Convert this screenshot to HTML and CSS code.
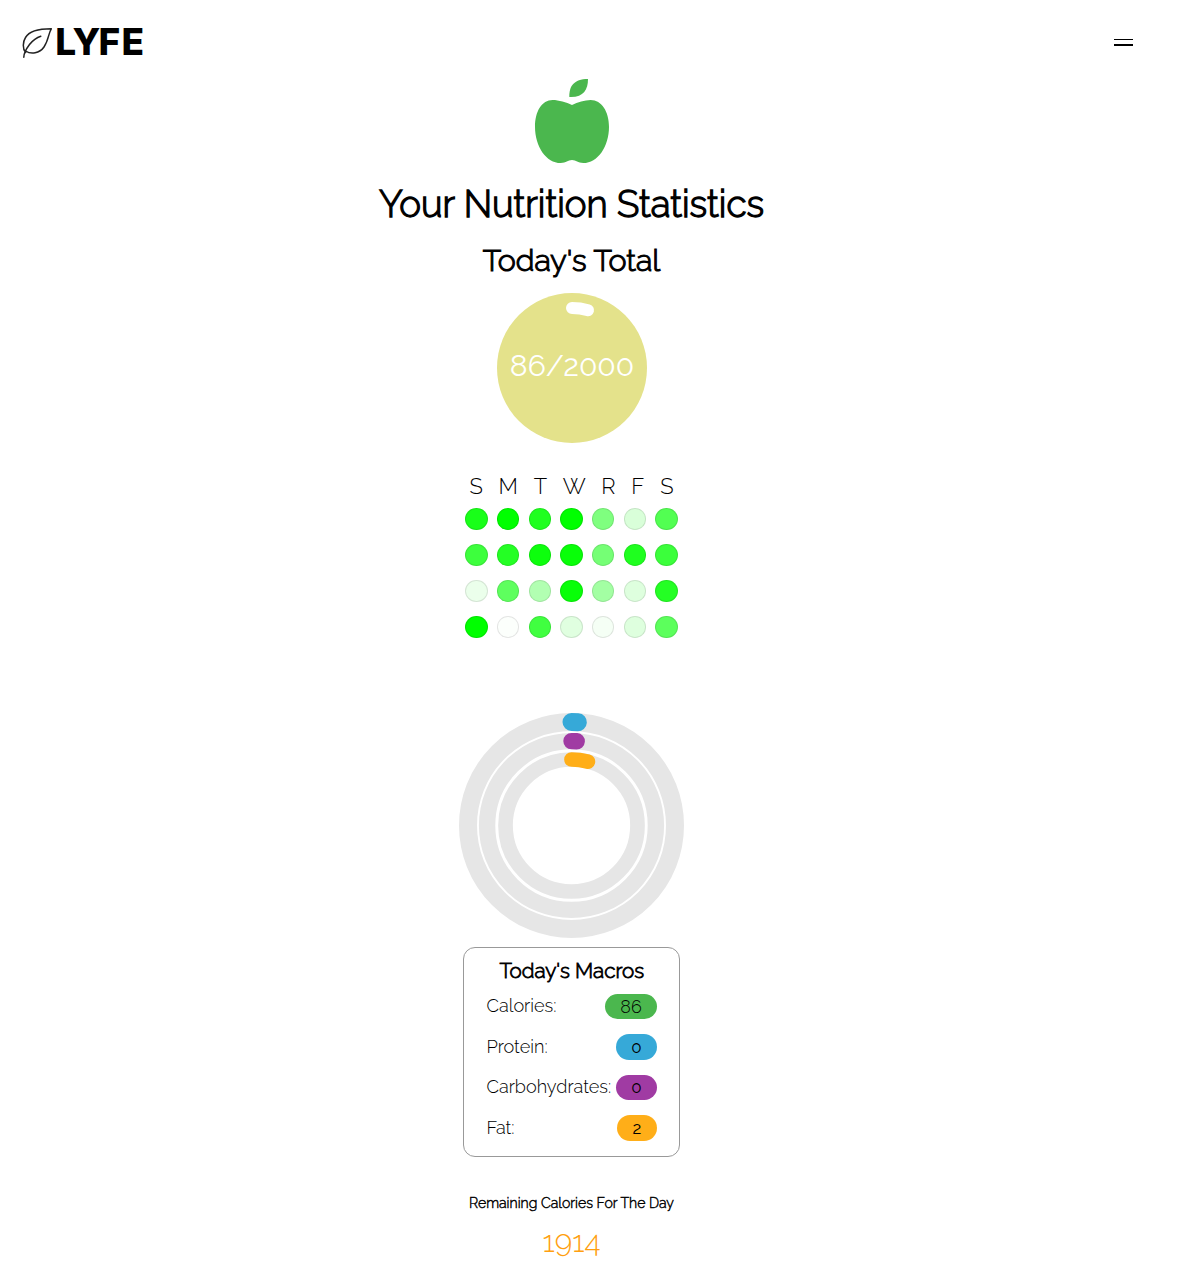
FILE: index.html
```html
<!DOCTYPE html>
<html lang="en">
<head>
<meta charset="utf-8">
<title>Lyfe</title>
<link rel="stylesheet" href="styles.css">
</head>
<body>
<header class="header">
  <svg class="logo" width="124" height="36" viewBox="0 0 124 36" role="img" aria-label="LYFE">
    <path class="leaf" d="M3.8 32.3C3.7 28 6.5 23.5 9.5 19.5C12.5 15.7 16 12.7 20.8 11.2M5.6 27.5C2.4 23.8 2.7 17 5.5 12.5C9 6.5 19 3.8 31.3 3.8C28.5 8 28.7 15 24 22C19.5 28.5 11 29.7 5.6 26"/>
    <text class="wordmark" x="35.2 52.6 78.6 101.4" y="30">LYFE</text>
  </svg>
  <button class="menu" aria-label="Menu"><span class="bar thin"></span><span class="bar"></span></button>
</header>
<main class="stats">
  <svg class="apple" width="75" height="85" viewBox="42 27 225 255">
    <path d="M148 81C147 49 161 27 204 27C204 60 190 83 148 81Z"/>
    <path d="M156 105C139 97 116 90 98 90C65 90 45 125 45 170C45 230 79 279 122 279C139 279 143 270 156 270C169 270 173 279 190 279C233 279 267 230 267 170C267 125 245 90 212 90C194 90 173 97 156 105Z"/>
  </svg>
  <h1 class="title">Your Nutrition Statistics</h1>
  <h2 class="subtitle">Today's Total</h2>
  <div class="total">
    <svg class="total-ring" width="150" height="150" viewBox="0 0 150 150"><circle cx="75" cy="75" r="60"/></svg>
    <span class="total-text">86/2000</span>
  </div>
  <div class="days"><span>S</span><span>M</span><span>T</span><span>W</span><span>R</span><span>F</span><span>S</span></div>
  <div class="calendar">
    <i class="dot" style="--a:.9"></i><i class="dot" style="--a:1"></i><i class="dot" style="--a:.88"></i><i class="dot" style="--a:1"></i><i class="dot" style="--a:.5"></i><i class="dot" style="--a:.15"></i><i class="dot" style="--a:.68"></i>
    <i class="dot" style="--a:.76"></i><i class="dot" style="--a:.86"></i><i class="dot" style="--a:.95"></i><i class="dot" style="--a:.97"></i><i class="dot" style="--a:.54"></i><i class="dot" style="--a:.88"></i><i class="dot" style="--a:.77"></i>
    <i class="dot" style="--a:.08"></i><i class="dot" style="--a:.63"></i><i class="dot" style="--a:.3"></i><i class="dot" style="--a:.97"></i><i class="dot" style="--a:.36"></i><i class="dot" style="--a:.13"></i><i class="dot" style="--a:.86"></i>
    <i class="dot" style="--a:1"></i><i class="dot" style="--a:.01"></i><i class="dot" style="--a:.75"></i><i class="dot" style="--a:.12"></i><i class="dot" style="--a:.04"></i><i class="dot" style="--a:.13"></i><i class="dot" style="--a:.64"></i>
  </div>
  <svg class="rings" width="225" height="225" viewBox="0 0 225 225">
    <g transform="rotate(-90 112.5 112.5)">
      <circle class="track" cx="112.5" cy="112.5" r="103.5" stroke-width="18"/>
      <circle class="track" cx="112.5" cy="112.5" r="84.4" stroke-width="16.4"/>
      <circle class="track" cx="112.5" cy="112.5" r="66" stroke-width="14.7"/>
      <circle class="arc protein" cx="112.5" cy="112.5" r="103.5" stroke-width="18" stroke-dasharray="6.5 900"/>
      <circle class="arc carbs" cx="112.5" cy="112.5" r="84.4" stroke-width="16.4" stroke-dasharray="5.3 900"/>
      <circle class="arc fat" cx="112.5" cy="112.5" r="66" stroke-width="14.7" stroke-dasharray="16.6 900"/>
    </g>
  </svg>
  <section class="macros">
    <h3 class="macros-title">Today's Macros</h3>
    <div class="row"><span class="label">Calories:</span><span class="pill green">86</span></div>
    <div class="row"><span class="label">Protein:</span><span class="pill blue"><span class="figure">0</span></span></div>
    <div class="row"><span class="label">Carbohydrates:</span><span class="pill purple"><span class="figure">0</span></span></div>
    <div class="row"><span class="label">Fat:</span><span class="pill orange"><span class="figure">2</span></span></div>
  </section>
  <h4 class="remaining">Remaining Calories For The Day</h4>
  <div class="left">1914</div>
</main>
</body>
</html>
```
FILE: styles.css
```css
* { box-sizing: border-box; }
body { margin: 0; background: #fff; color: #000; font-family: Raleway, Lato, "Open Sans", sans-serif; font-weight: 300; font-variant-numeric: oldstyle-nums; height: 1276px; overflow: hidden; }
h1, h2, h3, h4 { margin: 0; font-weight: 300; white-space: nowrap; }
.header { height: 79px; padding: 25px 59px 0 20px; display: flex; justify-content: space-between; align-items: flex-start; }
.logo { display: block; overflow: visible; }
.leaf { fill: none; stroke: #222; stroke-width: 1.5; stroke-linecap: round; stroke-linejoin: round; }
.wordmark { font: 800 37px Inter, sans-serif; }
.menu { margin: 14px 0 0; padding: 0; border: 0; background: none; width: 20px; display: flex; flex-direction: column; gap: 4px; }
.bar { height: 2px; width: 19px; background: #000; }
.thin { height: 1px; }
.stats { width: 1143px; display: flex; flex-direction: column; align-items: center; }
.apple { display: block; fill: #4bb74e; }
.title { margin-top: 18px; font-size: 36.7px; line-height: 46px; -webkit-text-stroke: 1.3px; }
.subtitle { margin-top: 12px; font-size: 30.4px; line-height: 40px; -webkit-text-stroke: 1.1px; }
.total { margin-top: 13px; width: 150px; height: 150px; border-radius: 50%; background: #e4e28b; color: #fff; display: grid; place-items: center; }
.total > * { grid-area: 1 / 1; }
.total-ring { fill: none; stroke: #fff; stroke-width: 12; stroke-linecap: round; stroke-dasharray: 16.3 900; transform: rotate(-90deg); }
.total-text { font-size: 30.1px; line-height: 36px; font-weight: 400; margin: -4px 0 0 1px; }
.days { margin-top: 29px; width: 204px; display: flex; justify-content: space-between; font-size: 22px; line-height: 29px; }
.calendar { width: 221.7px; display: grid; grid-template-columns: repeat(7, 1fr); grid-template-rows: repeat(4, 36px); justify-items: center; align-items: center; }
.dot { width: 22.5px; height: 22px; border-radius: 50%; border: 1px solid rgba(0, 0, 0, .1); background: rgba(0, 255, 0, var(--a)); }
.rings { display: block; margin-top: 68px; fill: none; }
.track { stroke: #e6e6e6; }
.arc { stroke-linecap: round; }
.protein { stroke: #36a9d8; }
.carbs { stroke: #a03ba3; }
.fat { stroke: #ffae18; }
.macros { margin-top: 9px; width: 217px; height: 210px; border: 1px solid #999; border-radius: 12px; padding: 9px 22px 0 22.5px; }
.macros-title { height: 29.4px; font-size: 20.6px; line-height: 28px; text-align: center; -webkit-text-stroke: .8px; }
.row { height: 40.5px; display: flex; justify-content: space-between; align-items: center; }
.label { font-size: 18.1px; line-height: 22px; margin-bottom: 1px; white-space: nowrap; }
.pill { height: 25.6px; width: 41px; border-radius: 13px; display: grid; place-items: center; font-size: 18px; line-height: 25px; }
.figure { display: inline-block; font-weight: 400; font-size: 17px; transform: scaleY(.94); }
.green { width: 52px; background: #4bb74e; }
.blue { background: #36a9d8; }
.purple { background: #a03ba3; }
.orange { width: 40px; background: #ffae18; }
.remaining { margin-top: 36px; font-size: 14.1px; line-height: 20px; -webkit-text-stroke: .45px; }
.left { margin-top: 11px; font-size: 30px; line-height: 36px; color: #ff9f10; }
```
